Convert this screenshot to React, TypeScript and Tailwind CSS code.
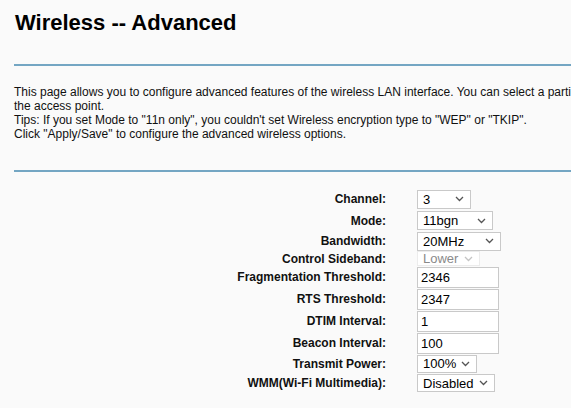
import React from "react";

const Chevron: React.FC<{ muted?: boolean }> = ({ muted }) => (
  <svg width="9" height="6" viewBox="0 0 9 6" className="shrink-0">
    <path
      d="M1 1l3.5 3.5L8 1"
      fill="none"
      stroke={muted ? "#c4c4c4" : "#555"}
      strokeWidth="1.3"
    />
  </svg>
);

const Select: React.FC<{ value: string; w: string; h: string; muted?: boolean }> = ({
  value,
  w,
  h,
  muted,
}) => (
  <div
    className={`flex items-center justify-between bg-white border pl-[5px] pr-[6px] text-[13px] leading-none ${w} ${h} ${
      muted ? "border-[#ececec] text-[#8a8a8a]" : "border-[#c9c9c9] text-black"
    }`}
  >
    <span>{value}</span>
    <Chevron muted={muted} />
  </div>
);

const Input: React.FC<{ value: string }> = ({ value }) => (
  <div className="flex items-center bg-white border border-[#c9c9c9] w-[82px] h-[21px] pl-[3px] text-[13px] leading-none text-black">
    {value}
  </div>
);

const rows: { label: string; h: string; control: React.ReactNode }[] = [
  { label: "Channel:", h: "h-[22px]", control: <Select value="3" w="w-[54px]" h="h-[19px]" /> },
  { label: "Mode:", h: "h-[21px]", control: <Select value="11bgn" w="w-[76px]" h="h-[19px]" /> },
  { label: "Bandwidth:", h: "h-[20px]", control: <Select value="20MHz" w="w-[84px]" h="h-[19px]" /> },
  { label: "Control Sideband:", h: "h-[15px]", control: <Select value="Lower" w="w-[63px]" h="h-[15px]" muted /> },
  { label: "Fragmentation Threshold:", h: "h-[22px]", control: <Input value="2346" /> },
  { label: "RTS Threshold:", h: "h-[22px]", control: <Input value="2347" /> },
  { label: "DTIM Interval:", h: "h-[22px]", control: <Input value="1" /> },
  { label: "Beacon Interval:", h: "h-[22px]", control: <Input value="100" /> },
  { label: "Transmit Power:", h: "h-[19px]", control: <Select value="100%" w="w-[60px]" h="h-[18px]" /> },
  { label: "WMM(Wi-Fi Multimedia):", h: "h-[20px]", control: <Select value="Disabled" w="w-[78px]" h="h-[18px]" /> },
];

export default function App() {
  return (
    <div
      className="w-[571px] h-[408px] overflow-hidden bg-[#fafafa] pl-[14px] text-black"
      style={{ fontFamily: '"Liberation Sans", Arial, sans-serif' }}
    >
      <h1 className="pt-[10px] text-[22px] leading-[26px] font-bold pl-[1px] whitespace-nowrap">
        Wireless -- Advanced
      </h1>
      <div className="mt-[28px] h-[2px] bg-[#74a6c3] w-[700px]" />
      <div className="mt-[19px] text-[12px] leading-[14px] whitespace-nowrap text-[#111]">
        <p>
          This page allows you to configure advanced features of the wireless LAN interface. You can select a particular
          channel on which to communicate and to force the transmission rate to a particular speed, and set other options for
        </p>
        <p>the access point.</p>
        <p>Tips: If you set Mode to "11n only", you couldn't set Wireless encryption type to "WEP" or "TKIP".</p>
        <p>Click "Apply/Save" to configure the advanced wireless options.</p>
      </div>
      <div className="mt-[29px] h-[2px] bg-[#74a6c3] w-[700px]" />
      <div className="mt-[16px] grid grid-cols-[372px_1fr] gap-x-[31px]">
        {rows.map((r) => (
          <React.Fragment key={r.label}>
            <div className={`flex items-center justify-end text-[12px] font-bold text-[#111] ${r.h}`}>{r.label}</div>
            <div className={`flex items-center ${r.h}`}>{r.control}</div>
          </React.Fragment>
        ))}
      </div>
    </div>
  );
}
